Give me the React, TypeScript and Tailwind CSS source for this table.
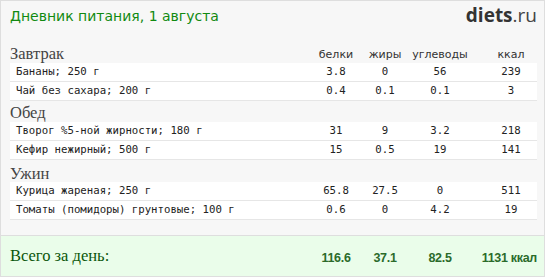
import React from 'react';

type Item = { name: string; p: string; f: string; c: string; k: string };

const meals: { title: string; items: Item[] }[] = [
    {
        title: 'Завтрак',
        items: [
            { name: 'Бананы; 250 г', p: '3.8', f: '0', c: '56', k: '239' },
            { name: 'Чай без сахара; 200 г', p: '0.4', f: '0.1', c: '0.1', k: '3' },
        ],
    },
    {
        title: 'Обед',
        items: [
            { name: 'Творог %5-ной жирности; 180 г', p: '31', f: '9', c: '3.2', k: '218' },
            { name: 'Кефир нежирный; 500 г', p: '15', f: '0.5', c: '19', k: '141' },
        ],
    },
    {
        title: 'Ужин',
        items: [
            { name: 'Курица жареная; 250 г', p: '65.8', f: '27.5', c: '0', k: '511' },
            { name: 'Томаты (помидоры) грунтовые; 100 г', p: '0.6', f: '0', c: '4.2', k: '19' },
        ],
    },
];

const grid = 'grid grid-cols-[1fr_48px_50px_60px_67px]';

export default function App() {
    return (
        <div className="w-[545px] h-[277px] border border-[#dedede] bg-[#f7f7f7] flex flex-col">
            <header className="h-[32px] flex items-center justify-between pl-[9px] pr-[7px] pb-[2px]">
                <h1 className="font-['DejaVu_Sans',sans-serif] text-[14px] text-[#118a11] leading-none">
                    Дневник питания, 1 августа
                </h1>
                <div className="font-['Open_Sans',sans-serif] text-[19px] leading-none text-[#333] -mt-[1px]">
                    <span className="font-bold">diets</span>
                    <span className="text-[#444]">.ru</span>
                </div>
            </header>

            <main className="pl-[9px] pr-[7px]">
                {meals.map((meal, mi) => (
                    <section key={meal.title}>
                        <div
                            className={`${grid} ${
                                mi === 0 ? 'h-[30px] pb-[1px]' : mi === 1 ? 'h-[21px] pb-[1px]' : 'h-[22px]'
                            } items-end`}
                        >
                            <h2 className="font-['Liberation_Serif',serif] text-[16.5px] leading-[16px] text-[#444]">
                                {meal.title}
                            </h2>
                            {mi === 0 && (
                                <>
                                    <span className="text-center font-['DejaVu_Sans',sans-serif] text-[11px] text-[#333] leading-[14px]">белки</span>
                                    <span className="text-center font-['DejaVu_Sans',sans-serif] text-[11px] text-[#333] leading-[14px]">жиры</span>
                                    <span className="text-center font-['DejaVu_Sans',sans-serif] text-[11px] text-[#333] leading-[14px]">углеводы</span>
                                    <span className="text-center pl-[15px] font-['DejaVu_Sans',sans-serif] text-[11px] text-[#333] leading-[14px]">ккал</span>
                                </>
                            )}
                        </div>
                        {meal.items.map((it) => (
                            <div
                                key={it.name}
                                className={`${grid} h-[19px] items-center pt-[1px] bg-white border-b border-[#e6e6e6] font-['DejaVu_Sans_Mono',monospace] text-[10.7px] text-[#222]`}
                            >
                                <span className="pl-[6px]">{it.name}</span>
                                <span className="text-center">{it.p}</span>
                                <span className="text-center">{it.f}</span>
                                <span className="text-center">{it.c}</span>
                                <span className="text-center pl-[15px]">{it.k}</span>
                            </div>
                        ))}
                    </section>
                ))}
            </main>

            <footer className={`mt-auto h-[41px] bg-[#eafdea] border-t border-[#dedede] pl-[9px] pr-[7px] ${grid} items-center`}>
                <span className="font-['Liberation_Serif',serif] text-[16.5px] text-[#0b560b] pt-[1px]">Всего за день:</span>
                <span className="text-center font-['Liberation_Sans',sans-serif] font-bold text-[12.5px] tracking-[-0.3px] text-[#2b6b2b] pt-[4px]">116.6</span>
                <span className="text-center font-['Liberation_Sans',sans-serif] font-bold text-[12.5px] tracking-[-0.3px] text-[#2b6b2b] pt-[4px]">37.1</span>
                <span className="text-center font-['Liberation_Sans',sans-serif] font-bold text-[12.5px] tracking-[-0.3px] text-[#2b6b2b] pt-[4px]">82.5</span>
                <span className="text-right font-['Liberation_Sans',sans-serif] font-bold text-[12.5px] tracking-[-0.3px] text-[#2b6b2b] pt-[4px]">1131 ккал</span>
            </footer>
        </div>
    );
}
